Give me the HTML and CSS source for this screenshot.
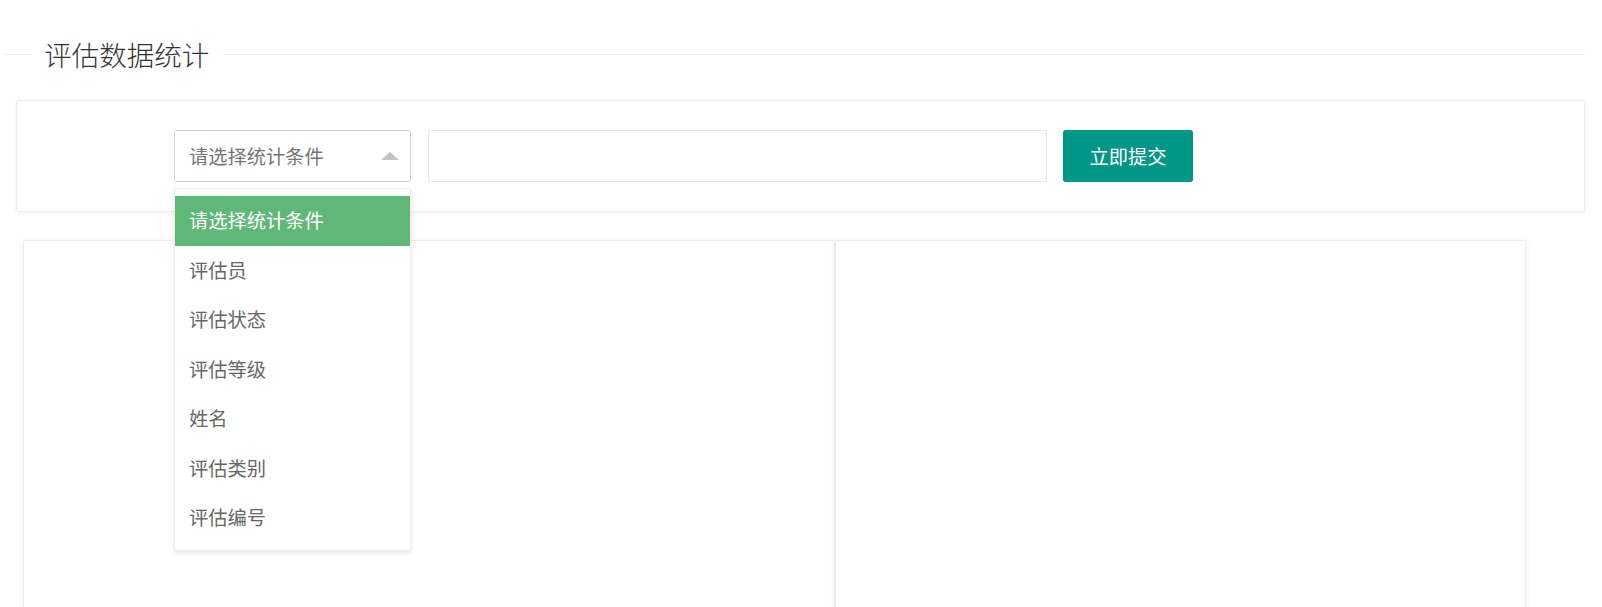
FILE: index.html
```html
<!DOCTYPE html>
<html>
<head>
  <meta charset="utf-8">
  <title>评估数据统计</title>
  <link rel="stylesheet" href="styles.css">
</head>
<body>
  <div class="page">
    <div class="field-title">
      <span class="field-line field-line-short"></span>
      <h2>评估数据统计</h2>
      <span class="field-line"></span>
    </div>

    <div class="search-card">
      <form class="search-form" onsubmit="return false">
        <div class="select select-open">
          <div class="select-title">
            <input type="text" placeholder="请选择统计条件" readonly>
            <i class="select-edge"></i>
          </div>
          <dl class="select-options">
            <dd class="selected">请选择统计条件</dd>
            <dd>评估员</dd>
            <dd>评估状态</dd>
            <dd>评估等级</dd>
            <dd>姓名</dd>
            <dd>评估类别</dd>
            <dd>评估编号</dd>
          </dl>
        </div>
        <input type="text" class="text-input">
        <button type="submit" class="submit-btn">立即提交</button>
      </form>
    </div>

    <div class="chart-row">
      <div class="chart-card chart-left"></div>
      <div class="chart-card chart-right"></div>
    </div>
  </div>
</body>
</html>
```

FILE: styles.css
```css
body {
  margin: 0;
  background: #fff;
  color: #333;
  font-family: "Noto Sans CJK SC", "Liberation Sans", sans-serif;
}

.page {
  padding: 0 17px 0 3px;
}

/* section title with line */
.field-title {
  display: flex;
  align-items: flex-start;
  padding-top: 39px;
}

.field-line {
  flex: 1;
  height: 0;
  margin-top: 15px;
  border-top: 1px solid #eee;
}

.field-line-short {
  flex: 0 0 27.5px;
}

.field-title h2 {
  margin: 0;
  padding: 0 13.75px;
  font-size: 27.5px;
  line-height: 30px;
  font-weight: 300;
  color: #333;
}

/* search card */
.search-card {
  margin: 31px 0 0 13px;
  padding: 29px 0 29px 157px;
  border: 1px solid #eee;
  border-radius: 2px;
  box-shadow: 0 1px 5px rgba(0, 0, 0, 0.06);
  background: #fff;
}

.search-form {
  display: flex;
  align-items: center;
}

.select {
  position: relative;
  width: 237px;
  margin-right: 17px;
}

.select-title input,
.text-input {
  box-sizing: border-box;
  height: 52px;
  padding: 0 14px;
  border: 1px solid #e6e6e6;
  border-radius: 2.75px;
  font-family: inherit;
  font-size: 19.25px;
  color: #666;
  background: #fff;
  outline: none;
}

.select-title input {
  width: 100%;
  border-color: #d2d2d2;
  cursor: pointer;
}

.select-title input::placeholder {
  color: #757575;
}

.select-edge {
  position: absolute;
  right: 12px;
  top: 22px;
  width: 0;
  height: 0;
  border-left: 9px solid transparent;
  border-right: 9px solid transparent;
  border-bottom: 8px solid #c2c2c2;
}

.select-options {
  position: absolute;
  top: 58px;
  left: 0;
  z-index: 10;
  box-sizing: border-box;
  width: 100%;
  margin: 0;
  padding: 7px 0;
  border: 1px solid #eee;
  border-radius: 2px;
  background: #fff;
  box-shadow: 0 2px 4px rgba(0, 0, 0, 0.1);
}

.select-options dd {
  margin: 0;
  padding: 0 14px;
  height: 49.5px;
  line-height: 49.5px;
  font-size: 19.25px;
  color: #666;
  white-space: nowrap;
  cursor: pointer;
}

.select-options dd.selected {
  background-color: #5FB878;
  color: #fff;
}

.text-input {
  width: 619px;
  margin-right: 16px;
}

.submit-btn {
  width: 130px;
  height: 52px;
  padding: 0;
  border: none;
  border-radius: 2.75px;
  background-color: #009688;
  color: #fff;
  font-family: inherit;
  font-size: 19.25px;
  cursor: pointer;
}

.submit-btn:hover {
  opacity: 0.8;
}

/* chart cards */
.chart-row {
  display: flex;
  margin: 28px 0 0 20px;
}

.chart-card {
  height: 420px;
  border: 1px solid #eee;
  border-radius: 2px;
  background: #fff;
  box-shadow: 0 1px 6px rgba(0, 0, 0, 0.07);
}

.chart-left {
  width: 810px;
}

.chart-right {
  width: 689px;
}
```
